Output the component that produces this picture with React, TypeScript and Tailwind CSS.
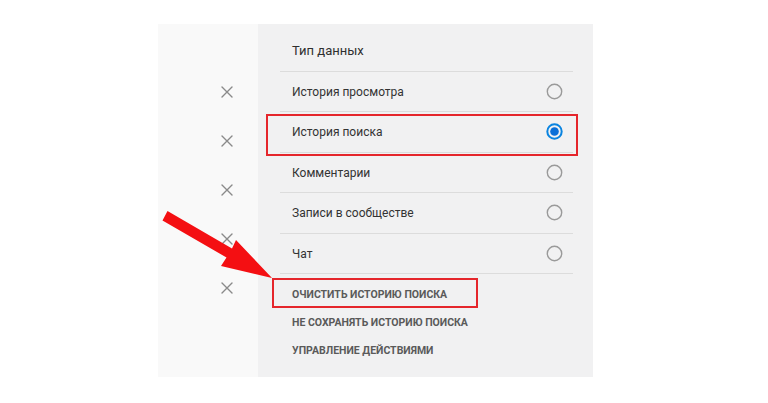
import React from "react";

const XIcon = () => (
  <svg width="14" height="14" viewBox="0 0 14 14" className="block">
    <path d="M2 2 L12 12 M12 2 L2 12" stroke="#8a8a8a" strokeWidth="1.4" strokeLinecap="round" />
  </svg>
);

const Radio = ({ checked }: { checked?: boolean }) =>
  checked ? (
    <svg width="17" height="17" viewBox="0 0 17 17" className="block">
      <circle cx="8.5" cy="8.5" r="7.2" fill="none" stroke="#0a84e0" strokeWidth="2" />
      <circle cx="8.5" cy="8.5" r="4.3" fill="#0a6fd8" />
    </svg>
  ) : (
    <svg width="17" height="17" viewBox="0 0 17 17" className="block">
      <circle cx="8.5" cy="8.5" r="7.2" fill="none" stroke="#9a9a9a" strokeWidth="1.4" />
    </svg>
  );

const rows = [
  { label: "История просмотра" },
  { label: "История поиска", checked: true },
  { label: "Комментарии" },
  { label: "Записи в сообществе" },
  { label: "Чат" },
];

const actions = [
  "ОЧИСТИТЬ ИСТОРИЮ ПОИСКА",
  "НЕ СОХРАНЯТЬ ИСТОРИЮ ПОИСКА",
  "УПРАВЛЕНИЕ ДЕЙСТВИЯМИ",
];

export default function App() {
  return (
    <div
      className="relative w-[768px] h-[403px] bg-white overflow-hidden"
      style={{ fontFamily: "Roboto, 'Noto Sans', 'Liberation Sans', sans-serif" }}
    >
      <div className="pt-[24px] pl-[158px]">
        <div className="relative flex w-[435px] h-[353px]">
          {/* left column */}
          <div className="w-[100px] bg-[#f9f9f9] flex flex-col pt-[43px] pl-[62px]">
            {[0, 1, 2, 3, 4].map((i) => (
              <div key={i} className="h-[49px] flex items-center">
                <XIcon />
              </div>
            ))}
          </div>
          {/* right panel */}
          <div className="flex-1 bg-[#f1f1f2] pl-[22px] pr-[20px]">
            <div className="h-[47.5px] pt-[7px] flex items-center pl-[12px] border-b border-[#dcdcdc] text-[13px] text-[#2f2f2f]">
              Тип данных
            </div>
            {rows.map((r) => (
              <div
                key={r.label}
                className="h-[40.5px] flex items-center justify-between pl-[12px] pr-[10px] border-b border-[#dcdcdc] text-[12px] text-[#333]"
              >
                <span className="pt-[1px]">{r.label}</span>
                <Radio checked={r.checked} />
              </div>
            ))}
            <div className="pt-[7px] pl-[12px] flex flex-col">
              {actions.map((a) => (
                <div
                  key={a}
                  className="h-[28px] flex items-center text-[10.5px] font-bold text-[#5a5a5a]"
                >
                  {a}
                </div>
              ))}
            </div>
          </div>
          {/* highlight boxes */}
          <div className="absolute left-[108px] top-[90px] w-[312px] h-[42px] border-2 border-[#e5262c]" />
          <div className="absolute left-[114px] top-[254px] w-[206px] h-[30px] border-2 border-[#e5262c]" />
        </div>
      </div>
      {/* arrow */}
      <svg
        className="absolute left-0 top-0 pointer-events-none"
        width="768"
        height="403"
        viewBox="0 0 768 403"
      >
        <polygon
          points="167.5,211 232,248.5 236,240 272,278 221,266 226.5,257.5 162.5,220.5"
          fill="#f40f12"
        />
      </svg>
    </div>
  );
}
